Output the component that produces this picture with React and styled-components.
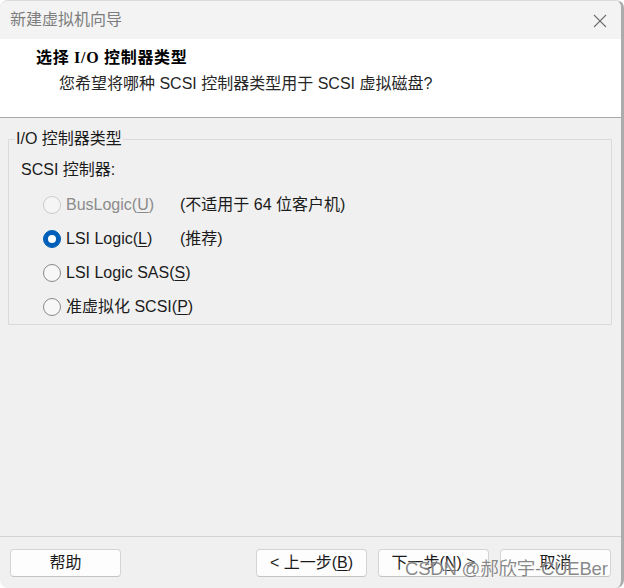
import {createGlobalStyle, styled} from 'styled-components'

const GlobalStyle = createGlobalStyle`
  html, body {
    margin: 0;
    padding: 0;
    background: #ffffff;
  }
  * {
    box-sizing: border-box;
  }
`

const UI_FONT = `"Liberation Sans", "Noto Sans CJK SC", sans-serif`

const Window = styled.div`
  position: relative;
  width: 624px;
  height: 588px;
  display: flex;
  flex-direction: column;
  background: #f0f0f0;
  border-top: 1px solid #dadada;
  border-right: 3px solid #acacac;
  border-radius: 8px;
  overflow: hidden;
  font-family: ${UI_FONT};
  font-size: 16px;
  color: #1b1b1b;
`

const TitleBar = styled.div`
  height: 38px;
  flex: 0 0 auto;
  display: flex;
  align-items: center;
  justify-content: space-between;
  padding: 0 14px 0 10px;
  background: #f3f3f3;
`

const TitleText = styled.span`
  color: #7d7d7d;
  font-size: 16px;
  line-height: 20px;
`

const CloseButton = styled.span`
  display: flex;
  width: 14px;
  height: 14px;
  margin-top: 1px;
`

const Header = styled.div`
  flex: 0 0 auto;
  height: 79px;
  background: #ffffff;
  border-bottom: 1px solid #a9a9a9;
  padding: 9px 0 0 36px;
`

const Heading = styled.div`
  font-family: "Liberation Serif", "Noto Sans CJK SC", serif;
  font-weight: bold;
  font-size: 16px;
  line-height: 20px;
  letter-spacing: 0.7px;
  color: #000;
`

const Subtitle = styled.div`
  margin: 6px 0 0 23px;
  line-height: 20px;
  color: #262626;
`

const Body = styled.div`
  flex: 1 1 auto;
  padding: 11px 9px 0 8px;
`

const Group = styled.fieldset`
  margin: 0;
  padding: 0 12px 0 12px;
  border: 1px solid #dadada;
  border-radius: 1px;
  min-width: 0;
`

const Legend = styled.legend`
  margin-left: -6px;
  padding: 0 1px;
  line-height: 20px;
  color: #1b1b1b;
`

const GroupLabel = styled.div`
  margin-top: 11px;
  line-height: 20px;
  height: 20px;
`

const OptionList = styled.div`
  margin-top: 8px;
  display: flex;
  flex-direction: column;
`

const Option = styled.label`
  height: 34px;
  display: flex;
  align-items: center;
  padding-left: 22px;
  color: ${p => (p.$disabled ? '#8b8b8b' : '#1b1b1b')};
`

const Radio = styled.span`
  width: 18px;
  height: 18px;
  flex: 0 0 auto;
  border-radius: 50%;
  margin-right: 5px;
  display: flex;
  align-items: center;
  justify-content: center;
  border: 1px solid ${p => (p.$checked ? '#005fb8' : p.$disabled ? '#cbcbcb' : '#8a8a8a')};
  background: ${p => (p.$checked ? '#005fb8' : p.$disabled ? '#f5f5f5' : '#f7f7f7')};

  &::after {
    content: '';
    display: ${p => (p.$checked ? 'block' : 'none')};
    width: 8px;
    height: 8px;
    border-radius: 50%;
    background: #ffffff;
  }
`

const OptionText = styled.span`
  min-width: 114px;
  line-height: 20px;
  white-space: nowrap;
`

const Note = styled.span`
  line-height: 20px;
  color: #1b1b1b;
  white-space: nowrap;
`

const Key = styled.u`
  text-decoration-thickness: 1px;
  text-underline-offset: 2px;
`

const Footer = styled.div`
  flex: 0 0 auto;
  height: 52px;
  border-top: 1px solid #d3d3d3;
  padding: 12px 10px 0 10px;
  display: flex;
  align-items: flex-start;
  justify-content: space-between;
`

const ButtonGroup = styled.div`
  display: flex;
  gap: 11px;
`

const Button = styled.button`
  width: 111px;
  height: 28px;
  padding: 0;
  background: #fdfdfd;
  border: 1px solid #d4d4d4;
  border-bottom-color: #c4c4c4;
  border-radius: 4px;
  font-family: ${UI_FONT};
  font-size: 16px;
  line-height: 20px;
  color: #1b1b1b;
  text-align: center;
`

const Watermark = styled.div`
  position: absolute;
  left: 405px;
  top: 557px;
  font-family: "Liberation Sans", "Noto Sans CJK SC", sans-serif;
  font-size: 18.5px;
  line-height: 22px;
  letter-spacing: -0.2px;
  color: rgba(115, 115, 115, 0.85);
  text-shadow: 0 0 2px rgba(255, 255, 255, 0.9);
  white-space: nowrap;
  pointer-events: none;
`

const options = [
  {text: 'BusLogic(', key: 'U', note: '(不适用于 64 位客户机)', disabled: true},
  {text: 'LSI Logic(', key: 'L', note: '(推荐)', checked: true},
  {text: 'LSI Logic SAS(', key: 'S'},
  {text: '准虚拟化 SCSI(', key: 'P'},
]

const App = () => (
  <>
    <GlobalStyle />
    <Window>
      <TitleBar>
        <TitleText>新建虚拟机向导</TitleText>
        <CloseButton>
          <svg width="14" height="14" viewBox="0 0 14 14">
            <path d="M1 1 L13 13 M13 1 L1 13" stroke="#707070" strokeWidth="1.1" fill="none" />
          </svg>
        </CloseButton>
      </TitleBar>
      <Header>
        <Heading>选择 I/O 控制器类型</Heading>
        <Subtitle>您希望将哪种 SCSI 控制器类型用于 SCSI 虚拟磁盘?</Subtitle>
      </Header>
      <Body>
        <Group>
          <Legend>I/O 控制器类型</Legend>
          <GroupLabel>SCSI 控制器:</GroupLabel>
          <OptionList>
            {options.map(opt => (
              <Option key={opt.key} $disabled={opt.disabled}>
                <Radio $checked={opt.checked} $disabled={opt.disabled} />
                <OptionText>
                  {opt.text}
                  <Key>{opt.key}</Key>)
                </OptionText>
                {opt.note && <Note>{opt.note}</Note>}
              </Option>
            ))}
          </OptionList>
        </Group>
      </Body>
      <Footer>
        <Button>帮助</Button>
        <ButtonGroup>
          <Button>&lt; 上一步(<Key>B</Key>)</Button>
          <Button>下一步(<Key>N</Key>) &gt;</Button>
          <Button>取消</Button>
        </ButtonGroup>
      </Footer>
      <Watermark>CSDN @郝欣宇-CUEBer</Watermark>
    </Window>
  </>
)

export default App
